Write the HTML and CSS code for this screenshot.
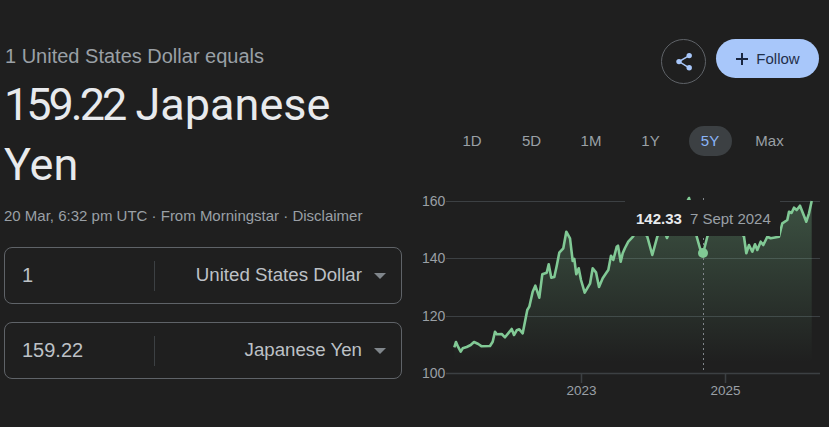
FILE: index.html
```html
<!DOCTYPE html>
<html lang="en">
<head>
    <meta charset="UTF-8">
    <title>USD to JPY</title>
    <link rel="stylesheet" href="styles.css">
</head>
<body>
    <div class="page">
        <div class="converter">
            <div class="equals">1 United States Dollar equals</div>
            <h1 class="result"><span class="result-value">159.22</span> <span>Japanese</span> <span>Yen</span></h1>
            <div class="meta">20 Mar, 6:32 pm UTC · From Morningstar · Disclaimer</div>

            <div class="field">
                <div class="amount">1</div>
                <div class="currency">United States Dollar<span class="caret"></span></div>
            </div>
            <div class="field">
                <div class="amount">159.22</div>
                <div class="currency">Japanese Yen<span class="caret"></span></div>
            </div>
        </div>

        <div class="market">
            <div class="actions">
                <button class="share-btn" aria-label="Share">
                    <svg width="20" height="20" viewBox="0 0 20 20">
                        <path class="share-line" d="M15.200 3.600 5 9.600 15.200 15.800"/>
                        <circle class="share-dot" cx="15.200" cy="3.600" r="2.700"/>
                        <circle class="share-dot" cx="5" cy="9.600" r="2.700"/>
                        <circle class="share-dot" cx="15.200" cy="15.800" r="2.700"/>
                    </svg>
                </button>
                <button class="follow-btn">
                    <svg width="14" height="14" viewBox="0 0 14 14">
                        <path class="plus" d="M7 1v12M1 7h12"/>
                    </svg>
                    Follow
                </button>
            </div>

            <div class="ranges">
                <span class="range">1D</span>
                <span class="range">5D</span>
                <span class="range">1M</span>
                <span class="range">1Y</span>
                <span class="range active">5Y</span>
                <span class="range">Max</span>
            </div>

            <div class="chart">
                <svg class="chart-svg" width="409" height="210" viewBox="420 190 409 210">
                    <defs>
                        <linearGradient id="areaFill" gradientUnits="userSpaceOnUse" x1="0" y1="200" x2="0" y2="362">
                            <stop offset="0" stop-color="#81c995" stop-opacity="0.3"/>
                            <stop offset="1" stop-color="#81c995" stop-opacity="0"/>
                        </linearGradient>
                    </defs>

                    <path class="grid" d="M446 201.500H820M446 258.500H820M446 316.500H820"/>
                    <path class="axis" d="M446 373.500H820M581.500 374V383M725.500 374V383"/>

                    <text class="tick" x="422" y="206">160</text>
                    <text class="tick" x="422" y="263">140</text>
                    <text class="tick" x="422" y="321">120</text>
                    <text class="tick" x="422" y="378">100</text>
                    <text class="tick year" x="581.500" y="395">2023</text>
                    <text class="tick year" x="725.500" y="395">2025</text>

                    <path class="area" d="M454.300 347.300L456 342L458 346.700L460.700 351.700L462.700 348.300L466.700 347L470.700 345L474 342L478.300 344L481.700 346.300L490 346L492.700 341.700L495 331.700L496.700 334.300L501.700 334L505 337.300L511.700 329L514 335L516.700 330.300L519.300 329.300L522.700 333.300L527.300 310L529.300 306.700L532.700 291.700L535.300 285.700L539.300 297.700L542.300 274.300L546.700 272.700L548.700 264.300L551.300 277.700L554.300 277L556.700 266L559.300 252.700L563.300 248.300L566.300 231.700L570 238.300L572.700 261L574.300 259L576.300 274.300L578.700 268.300L581 280L584.700 292.700L590 283.700L592.700 268.300L596 272.300L599 287L602.700 278.300L606.700 272.300L608.300 270L611 255.700L613.300 260L616.700 246.700L618 245.700L620.700 261.700L622.700 253.300L625 248L628.300 241.700L633 236.700L640 225L647.300 236.700L652.300 255L657.300 236.700L662 225L667 238L672 225L680 215L689 198L693 212L696.700 236.700L700 248.300L702.700 255L707.300 236.700L715 220L725 215L735 222L744 236.700L746.300 253.300L749 245L752.300 251.700L755 244.300L757.300 250L760.700 241.700L763.300 245L767.300 236.700L770.700 238.300L779 236.700L782.300 223.300L787.300 220L789 211.700L791.500 213L794 207.700L796.700 210L800 205.700L806.300 221.700L809 213.300L811.700 201L811.700 362L454.300 362Z"/>
                    <path class="line" d="M454.300 347.300L456 342L458 346.700L460.700 351.700L462.700 348.300L466.700 347L470.700 345L474 342L478.300 344L481.700 346.300L490 346L492.700 341.700L495 331.700L496.700 334.300L501.700 334L505 337.300L511.700 329L514 335L516.700 330.300L519.300 329.300L522.700 333.300L527.300 310L529.300 306.700L532.700 291.700L535.300 285.700L539.300 297.700L542.300 274.300L546.700 272.700L548.700 264.300L551.300 277.700L554.300 277L556.700 266L559.300 252.700L563.300 248.300L566.300 231.700L570 238.300L572.700 261L574.300 259L576.300 274.300L578.700 268.300L581 280L584.700 292.700L590 283.700L592.700 268.300L596 272.300L599 287L602.700 278.300L606.700 272.300L608.300 270L611 255.700L613.300 260L616.700 246.700L618 245.700L620.700 261.700L622.700 253.300L625 248L628.300 241.700L633 236.700L640 225L647.300 236.700L652.300 255L657.300 236.700L662 225L667 238L672 225L680 215L689 198L693 212L696.700 236.700L700 248.300L702.700 255L707.300 236.700L715 220L725 215L735 222L744 236.700L746.300 253.300L749 245L752.300 251.700L755 244.300L757.300 250L760.700 241.700L763.300 245L767.300 236.700L770.700 238.300L779 236.700L782.300 223.300L787.300 220L789 211.700L791.500 213L794 207.700L796.700 210L800 205.700L806.300 221.700L809 213.300L811.700 201"/>

                    <path class="cursor" d="M703.500 198V372"/>
                    <circle class="marker" cx="703" cy="253" r="5"/>
                </svg>
                <div class="tooltip"><span class="tooltip-value">142.33</span><span class="tooltip-date">7 Sept 2024</span></div>
            </div>
        </div>
    </div>
</body>
</html>
```

FILE: styles.css
```css
* {
    margin: 0;
    padding: 0;
    box-sizing: border-box;
}

body {
    font-family: "Liberation Sans", Arial, sans-serif;
    background: #1f1f1f;
    color: #e8eaed;
    overflow: hidden;
    height: 100vh;
}

.page {
    display: flex;
    height: 427px;
}

.converter {
    width: 420px;
    flex-shrink: 0;
    padding: 44px 18px 0 4px;
}

.equals {
    font-size: 20px;
    line-height: 24px;
    color: #9aa0a6;
    padding-left: 1px;
}

.result {
    font-family: Roboto, sans-serif;
    font-size: 45px;
    font-weight: 400;
    line-height: 60px;
    color: #e8eaed;
    margin-top: 7px;
    width: 340px;
}

.result-value {
    letter-spacing: -3px;
}

.meta {
    font-size: 15px;
    line-height: 20px;
    color: #9aa0a6;
    margin-top: 11px;
    margin-bottom: 21px;
}

.field {
    display: flex;
    align-items: center;
    height: 57px;
    border: 1px solid #5f6368;
    border-radius: 8px;
    margin-bottom: 18px;
}

.amount {
    width: 150px;
    height: 30px;
    padding-left: 17px;
    border-right: 1px solid #3c4043;
    font-size: 20px;
    line-height: 28px;
    color: #bdc1c6;
}

.currency {
    flex: 1;
    display: flex;
    align-items: center;
    justify-content: flex-end;
    padding-right: 15px;
    padding-bottom: 2px;
    font-size: 18.700px;
    color: #bdc1c6;
}

.caret {
    width: 0;
    height: 0;
    margin-left: 12px;
    margin-top: 2px;
    border-left: 6px solid transparent;
    border-right: 6px solid transparent;
    border-top: 6px solid #80868b;
}

.market {
    flex: 1;
    padding-top: 39px;
}

.actions {
    display: flex;
    justify-content: flex-end;
    align-items: flex-start;
    gap: 10px;
    padding-right: 10px;
}

.share-btn {
    width: 45px;
    height: 45px;
    border: 1px solid #5f6368;
    border-radius: 50%;
    background: none;
    display: flex;
    align-items: center;
    justify-content: center;
}

.share-line {
    fill: none;
    stroke: #a8c7fa;
    stroke-width: 1.500;
}

.share-dot {
    fill: #a8c7fa;
}

.follow-btn {
    width: 103px;
    height: 39px;
    border: none;
    border-radius: 20px;
    background: #a8c7fa;
    color: #1f2f4a;
    font-family: inherit;
    font-size: 15px;
    display: flex;
    align-items: center;
    justify-content: center;
    gap: 7px;
}

.plus {
    fill: none;
    stroke: #1a2740;
    stroke-width: 2;
}

.ranges {
    display: flex;
    gap: 16.500px;
    margin-top: 42px;
    padding-left: 30.500px;
}

.range {
    width: 43px;
    height: 30px;
    border-radius: 15px;
    font-size: 15px;
    line-height: 30px;
    text-align: center;
    color: #9aa0a6;
}

.range.active {
    background: #3c4043;
    color: #8ab4f8;
}

.chart {
    position: relative;
    margin-top: 34px;
}

.chart-svg {
    display: block;
}

.grid {
    fill: none;
    stroke: #3c4043;
    stroke-width: 1;
}

.axis {
    fill: none;
    stroke: #3c4043;
    stroke-width: 1.500;
}

.tick {
    font-size: 14px;
    fill: #9aa0a6;
}

.tick.year {
    font-size: 13.500px;
    text-anchor: middle;
}

.area {
    fill: url(#areaFill);
}

.line {
    fill: none;
    stroke: #81c995;
    stroke-width: 2.600;
    stroke-linejoin: round;
}

.cursor {
    fill: none;
    stroke: #80868b;
    stroke-width: 1;
    stroke-dasharray: 2 3;
}

.marker {
    fill: #81c995;
}

.tooltip {
    position: absolute;
    left: 205px;
    top: 10px;
    width: 155px;
    height: 36px;
    padding-left: 11px;
    background: #1f1f1f;
    font-size: 15px;
    line-height: 37px;
    white-space: nowrap;
}

.tooltip-value {
    color: #e8eaed;
    font-weight: 700;
    margin-right: 8px;
}

.tooltip-date {
    color: #9aa0a6;
}
```
